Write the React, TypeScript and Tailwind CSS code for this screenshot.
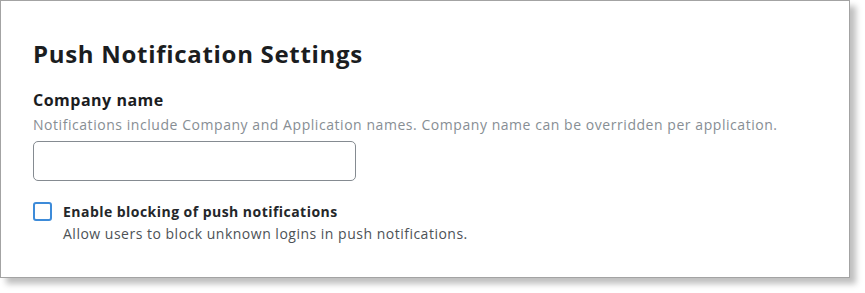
export default function App() {
  return (
    <div className="w-[865px] h-[293px] bg-white" style={{ fontFamily: '"Open Sans", sans-serif' }}>
      <div className="w-[850px] h-[278px] border border-[#a3a3a3] bg-white shadow-[6px_6px_6px_rgba(0,0,0,0.25)] px-8 pt-[37px]">
        <h1 className="text-[24px] leading-[32px] font-bold tracking-[0.7px] text-[#1b1d1f]">Push Notification Settings</h1>
        <div className="mt-[20px]">
          <div className="text-[16px] leading-5 font-bold tracking-[0.5px] text-[#1b1d1f]">Company name</div>
          <div className="mt-[5px] text-[14px] leading-5 tracking-[0.55px] text-[#878e94]">
            Notifications include Company and Application names. Company name can be overridden per application.
          </div>
          <input className="mt-[6px] w-[323px] h-[40px] rounded-[5px] border border-[#858b91] px-3 outline-none" />
        </div>
        <label className="mt-[21px] flex items-start gap-[11px]">
          <span className="mt-0 w-[19px] h-[19px] rounded-[3px] border-2 border-[#3d8bd9] shrink-0" />
          <span className="flex flex-col">
            <span className="text-[14px] leading-5 font-bold tracking-[0.46px] text-[#24272a]">Enable blocking of push notifications</span>
            <span className="mt-[2px] text-[14px] leading-5 tracking-[0.5px] text-[#4d5256]">Allow users to block unknown logins in push notifications.</span>
          </span>
        </label>
      </div>
    </div>
  );
}
